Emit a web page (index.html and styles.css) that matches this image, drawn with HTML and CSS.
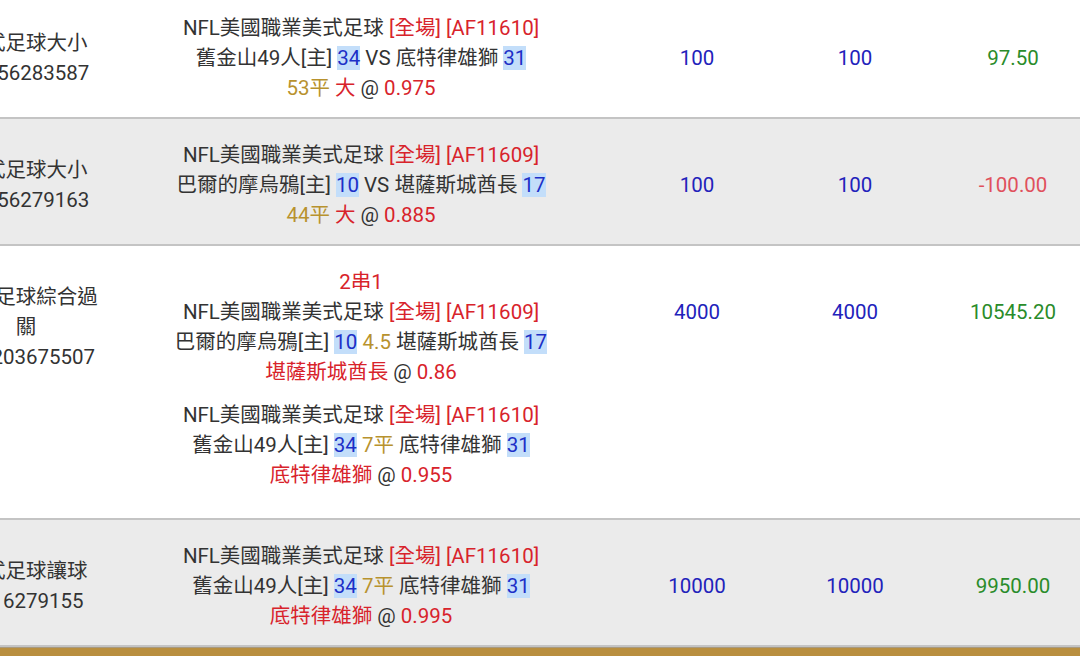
FILE: index.html
```html
<!DOCTYPE html>
<html lang="zh-Hant">
<head>
  <meta charset="UTF-8" />
  <meta name="viewport" content="width=device-width, initial-scale=1.0" />
  <title>投注記錄</title>
  <link rel="stylesheet" href="styles.css">
</head>
<body>
  <div class="bets">
    <div class="row">
      <div class="type">美式足球大小<br>20156283587</div>
      <div class="match">
        NFL美國職業美式足球 <span class="red">[全場] [AF11610]</span><br>
        舊金山49人[主] <span class="score">34</span> VS 底特律雄獅 <span class="score">31</span><br>
        <span class="gold">53平</span> <span class="red">大</span> @ <span class="red">0.975</span>
      </div>
      <div class="num">100</div>
      <div class="num">100</div>
      <div class="win">97.50</div>
    </div>

    <div class="row alt">
      <div class="type">美式足球大小<br>20156279163</div>
      <div class="match">
        NFL美國職業美式足球 <span class="red">[全場] [AF11609]</span><br>
        巴爾的摩烏鴉[主] <span class="score">10</span> VS 堪薩斯城酋長 <span class="score">17</span><br>
        <span class="gold">44平</span> <span class="red">大</span> @ <span class="red">0.885</span>
      </div>
      <div class="num">100</div>
      <div class="num">100</div>
      <div class="lose">-100.00</div>
    </div>

    <div class="row parlay">
      <div class="type">美式足球綜合過關<br>201203675507</div>
      <div class="match">
        <span class="red">2串1</span><br>
        NFL美國職業美式足球 <span class="red">[全場] [AF11609]</span><br>
        巴爾的摩烏鴉[主] <span class="score">10</span> <span class="gold">4.5</span> 堪薩斯城酋長 <span class="score">17</span><br>
        <span class="red">堪薩斯城酋長</span> @ <span class="red">0.86</span>
      </div>
      <div class="num top">4000</div>
      <div class="num top">4000</div>
      <div class="win top">10545.20</div>
      <div class="match leg">
        NFL美國職業美式足球 <span class="red">[全場] [AF11610]</span><br>
        舊金山49人[主] <span class="score">34</span> <span class="gold">7平</span> 底特律雄獅 <span class="score">31</span><br>
        <span class="red">底特律雄獅</span> @ <span class="red">0.955</span>
      </div>
    </div>

    <div class="row alt">
      <div class="type">美式足球讓球<br>2016279155</div>
      <div class="match">
        NFL美國職業美式足球 <span class="red">[全場] [AF11610]</span><br>
        舊金山49人[主] <span class="score">34</span> <span class="gold">7平</span> 底特律雄獅 <span class="score">31</span><br>
        <span class="red">底特律雄獅</span> @ <span class="red">0.995</span>
      </div>
      <div class="num">10000</div>
      <div class="num">10000</div>
      <div class="win">9950.00</div>
    </div>
  </div>
  <div class="footer-bar"></div>
</body>
</html>
```

FILE: styles.css
```css
body {
  margin: 0;
  height: 656px;
  overflow: hidden;
  background: #fff;
  font-family: Roboto, "Noto Sans CJK TC", sans-serif;
  font-size: 20.5px;
  line-height: 30px;
  color: #333;
}

.bets {
  width: 1144px;
  margin: -8px 0 0 -52px;
}

.row {
  display: grid;
  grid-template-columns: 156px 514px 158px 158px 158px;
  align-items: center;
  text-align: center;
  padding: 21px 0 14px;
  border-bottom: 2px solid #c4c4c4;
}

.row.alt {
  background: #ebebeb;
}

.row.parlay {
  align-items: start;
  padding-bottom: 0;
}

.parlay .type {
  align-self: center;
}

.parlay .top {
  padding-top: 30px;
}

.parlay .leg {
  grid-column: 2;
  padding: 13px 0 28px;
}

.type {
  color: #333;
}

.red {
  color: #d8232b;
}

.gold {
  color: #b8922e;
}

.score {
  color: #1c2fc7;
  background: #c3defa;
}

.num {
  color: #2222bb;
}

.win {
  color: #2a8c2a;
}

.lose {
  color: #e0505c;
}

.footer-bar {
  height: 10px;
  background: #b98f3f;
  border-top: 1px solid #a89a80;
}
```
